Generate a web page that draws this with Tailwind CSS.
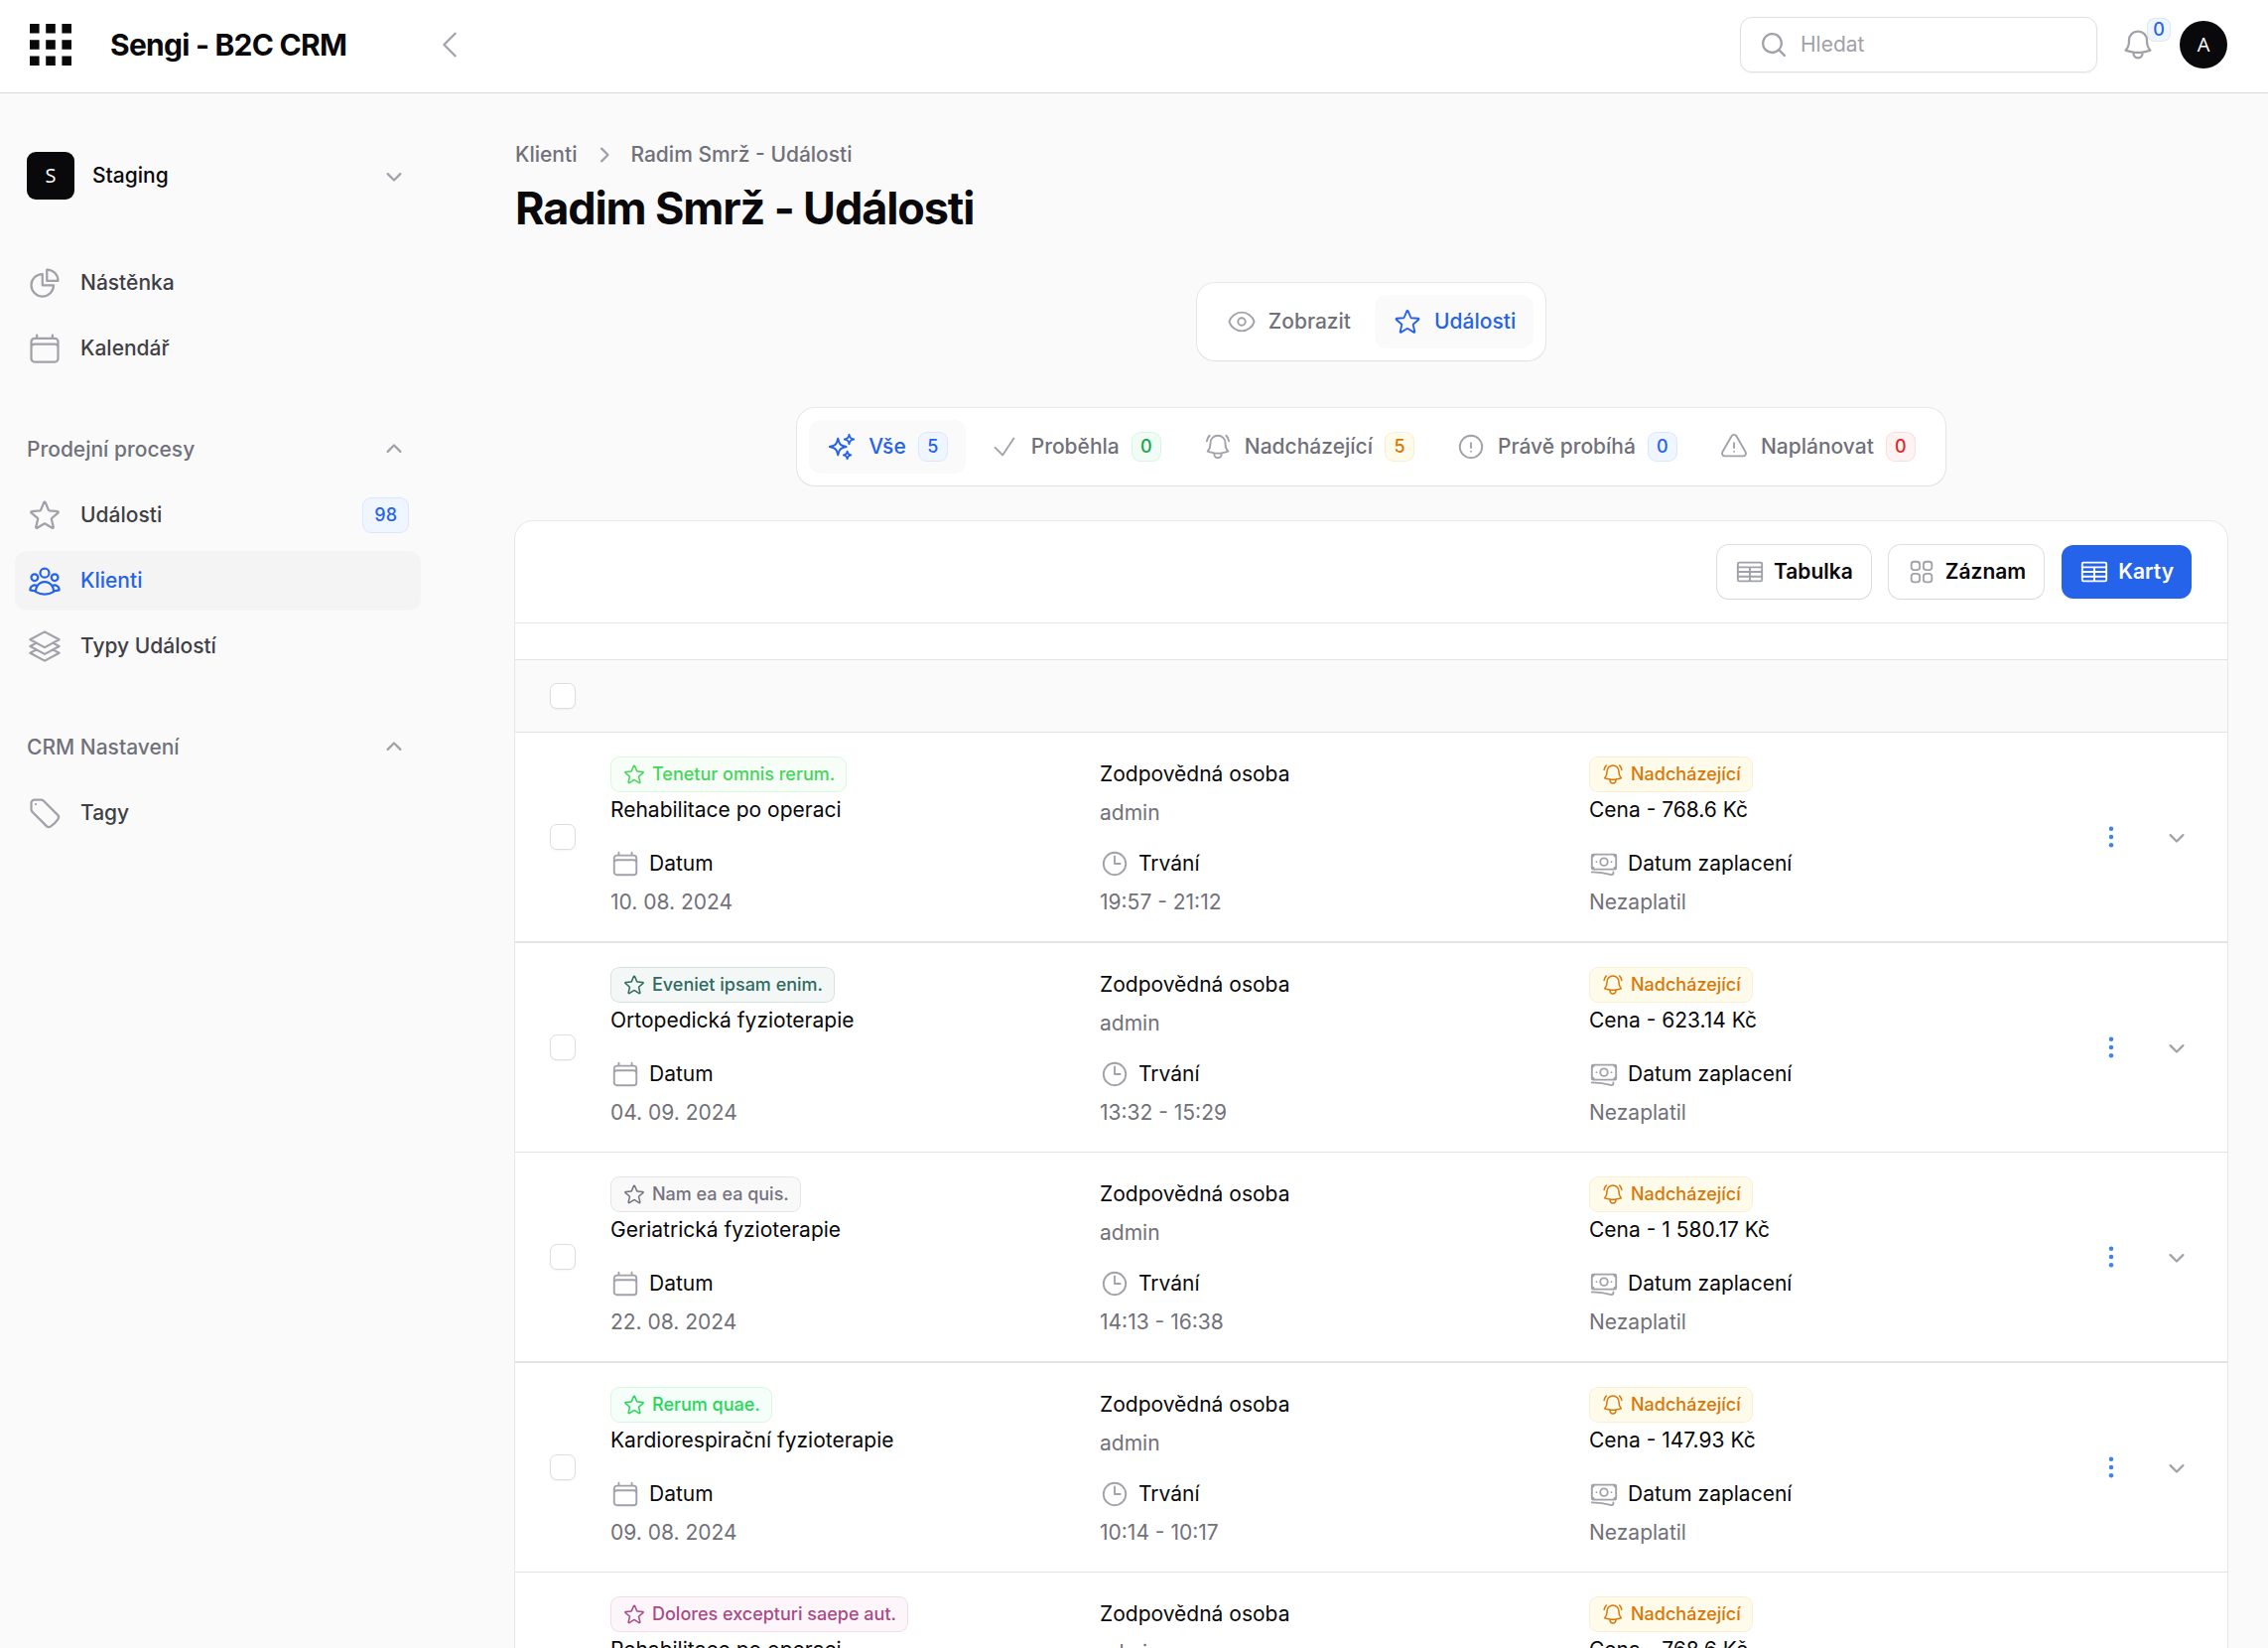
<!DOCTYPE html>
<html lang="cs">
<head>
<meta charset="utf-8">
<title>Radim Smrž - Události - Sengi - B2C CRM</title>
<meta name="viewport" content="width=device-width, initial-scale=1">
<script src="https://cdn.jsdelivr.net/npm/@tailwindcss/browser@4"></script>
</head>
<body class="flex h-screen flex-col overflow-hidden bg-[#fafafa] font-['Inter',sans-serif] text-[21px] leading-[30px] text-[#09090b] antialiased">

<!-- Icon sprite -->
<svg class="hidden" aria-hidden="true">
  <symbol id="i-star" viewBox="0 0 24 24"><path d="M11.48 3.499a.562.562 0 0 1 1.04 0l2.125 5.111a.563.563 0 0 0 .475.345l5.518.442c.499.04.701.663.321.988l-4.204 3.602a.563.563 0 0 0-.182.557l1.285 5.385a.562.562 0 0 1-.84.61l-4.725-2.885a.562.562 0 0 0-.586 0L6.982 20.54a.562.562 0 0 1-.84-.61l1.285-5.386a.562.562 0 0 0-.182-.557l-4.204-3.602a.562.562 0 0 1 .321-.988l5.518-.442a.563.563 0 0 0 .475-.345L11.48 3.5Z"/></symbol>
  <symbol id="i-pie" viewBox="0 0 24 24"><path d="M10.5 6a7.5 7.5 0 1 0 7.5 7.5h-7.5V6Z"/><path d="M13.5 10.5H21A7.5 7.5 0 0 0 13.5 3v7.5Z"/></symbol>
  <symbol id="i-calendar" viewBox="0 0 24 24"><path d="M6.75 3v2.25M17.25 3v2.25M3 18.75V7.5a2.25 2.25 0 0 1 2.25-2.25h13.5A2.25 2.25 0 0 1 21 7.5v11.25m-18 0A2.25 2.25 0 0 0 5.25 21h13.5A2.25 2.25 0 0 0 21 18.75m-18 0v-7.5A2.25 2.25 0 0 1 5.25 9h13.5A2.25 2.25 0 0 1 21 11.25v7.5"/></symbol>
  <symbol id="i-users" viewBox="0 0 24 24"><path d="M18 18.72a9.094 9.094 0 0 0 3.741-.479 3 3 0 0 0-4.682-2.72m.94 3.198.001.031c0 .225-.012.447-.037.666A11.944 11.944 0 0 1 12 21c-2.17 0-4.207-.576-5.963-1.584A6.062 6.062 0 0 1 6 18.719m12 0a5.971 5.971 0 0 0-.941-3.197m0 0A5.995 5.995 0 0 0 12 12.75a5.995 5.995 0 0 0-5.058 2.772m0 0a3 3 0 0 0-4.681 2.72 8.986 8.986 0 0 0 3.74.477m.94-3.197a5.971 5.971 0 0 0-.94 3.197M15 6.75a3 3 0 1 1-6 0 3 3 0 0 1 6 0Zm6 3a2.25 2.25 0 1 1-4.5 0 2.25 2.25 0 0 1 4.5 0Zm-13.5 0a2.25 2.25 0 1 1-4.5 0 2.25 2.25 0 0 1 4.5 0Z"/></symbol>
  <symbol id="i-stack" viewBox="0 0 24 24"><path d="M6.429 9.75 2.25 12l4.179 2.25m0-4.5 5.571 3 5.571-3m-11.142 0L2.25 7.5 12 2.25l9.75 5.25-4.179 2.25m0 0L21.75 12l-4.179 2.25m0 0 4.179 2.25L12 21.75 2.25 16.5l4.179-2.25m11.142 0-5.571 3-5.571-3"/></symbol>
  <symbol id="i-tag" viewBox="0 0 24 24"><path d="M9.568 3H5.25A2.25 2.25 0 0 0 3 5.25v4.318c0 .597.237 1.17.659 1.591l9.581 9.581c.699.699 1.78.872 2.607.33a18.095 18.095 0 0 0 5.223-5.223c.542-.827.369-1.908-.33-2.607L11.16 3.66A2.25 2.25 0 0 0 9.568 3Z"/><path d="M6 6h.008v.008H6V6Z"/></symbol>
  <symbol id="i-bell" viewBox="0 0 24 24"><path d="M14.857 17.082a23.848 23.848 0 0 0 5.454-1.31A8.967 8.967 0 0 1 18 9.75V9A6 6 0 0 0 6 9v.75a8.967 8.967 0 0 1-2.312 6.022c1.733.64 3.56 1.085 5.455 1.31m5.714 0a24.255 24.255 0 0 1-5.714 0m5.714 0a3 3 0 1 1-5.714 0"/></symbol>
  <symbol id="i-bell-alert" viewBox="0 0 24 24"><path d="M14.857 17.082a23.848 23.848 0 0 0 5.454-1.31A8.967 8.967 0 0 1 18 9.75V9A6 6 0 0 0 6 9v.75a8.967 8.967 0 0 1-2.312 6.022c1.733.64 3.56 1.085 5.455 1.31m5.714 0a24.255 24.255 0 0 1-5.714 0m5.714 0a3 3 0 1 1-5.714 0M3.124 7.5A8.969 8.969 0 0 1 5.292 3m13.416 0a8.969 8.969 0 0 1 2.168 4.5"/></symbol>
  <symbol id="i-eye" viewBox="0 0 24 24"><path d="M2.036 12.322a1.012 1.012 0 0 1 0-.639C3.423 7.51 7.36 4.5 12 4.5c4.638 0 8.573 3.007 9.963 7.178.07.207.07.431 0 .639C20.577 16.49 16.64 19.5 12 19.5c-4.638 0-8.573-3.007-9.963-7.178Z"/><path d="M15 12a3 3 0 1 1-6 0 3 3 0 0 1 6 0Z"/></symbol>
  <symbol id="i-sparkles" viewBox="0 0 24 24"><path d="M9.813 15.904 9 18.75l-.813-2.846a4.5 4.5 0 0 0-3.09-3.09L2.25 12l2.846-.813a4.5 4.5 0 0 0 3.09-3.09L9 5.25l.813 2.846a4.5 4.5 0 0 0 3.09 3.09L15.75 12l-2.846.813a4.5 4.5 0 0 0-3.09 3.09ZM18.259 8.715 18 9.75l-.259-1.035a3.375 3.375 0 0 0-2.455-2.456L14.25 6l1.036-.259a3.375 3.375 0 0 0 2.455-2.456L18 2.25l.259 1.035a3.375 3.375 0 0 0 2.456 2.456L21.75 6l-1.035.259a3.375 3.375 0 0 0-2.456 2.456ZM16.894 20.567 16.5 21.75l-.394-1.183a2.25 2.25 0 0 0-1.423-1.423L13.5 18.75l1.183-.394a2.25 2.25 0 0 0 1.423-1.423l.394-1.183.394 1.183a2.25 2.25 0 0 0 1.423 1.423l1.183.394-1.183.394a2.25 2.25 0 0 0-1.423 1.423Z"/></symbol>
  <symbol id="i-check" viewBox="0 0 24 24"><path d="m4.5 12.75 6 6 9-13.5"/></symbol>
  <symbol id="i-info" viewBox="0 0 24 24"><path d="M12 9v3.75m9-.75a9 9 0 1 1-18 0 9 9 0 0 1 18 0Zm-9 3.75h.008v.008H12v-.008Z"/></symbol>
  <symbol id="i-warning" viewBox="0 0 24 24"><path d="M12 9v3.75m-9.303 3.376c-.866 1.5.217 3.374 1.948 3.374h14.71c1.73 0 2.813-1.874 1.948-3.374L13.949 3.378c-.866-1.5-3.032-1.5-3.898 0L2.697 16.126ZM12 15.75h.007v.008H12v-.008Z"/></symbol>
  <symbol id="i-table" viewBox="0 0 24 24"><path d="M3.375 19.5h17.25m-17.25 0a1.125 1.125 0 0 1-1.125-1.125M3.375 19.5h7.5c.621 0 1.125-.504 1.125-1.125m-9.75 0V5.625m0 12.75v-1.5c0-.621.504-1.125 1.125-1.125m18.375 2.625V5.625m0 12.75c0 .621-.504 1.125-1.125 1.125m1.125-1.125v-1.5c0-.621-.504-1.125-1.125-1.125m0 3.75h-7.5A1.125 1.125 0 0 1 12 18.375m9.75-12.75c0-.621-.504-1.125-1.125-1.125H3.375c-.621 0-1.125.504-1.125 1.125m19.5 0v1.5c0 .621-.504 1.125-1.125 1.125M2.25 5.625v1.5c0 .621.504 1.125 1.125 1.125m0 0h17.25m-17.25 0h7.5c.621 0 1.125.504 1.125 1.125M3.375 8.25c-.621 0-1.125.504-1.125 1.125v1.5c0 .621.504 1.125 1.125 1.125m17.25-3.75h-7.5c-.621 0-1.125.504-1.125 1.125m8.625-1.125c.621 0 1.125.504 1.125 1.125v1.5c0 .621-.504 1.125-1.125 1.125m-17.25 0h7.5m-7.5 0c-.621 0-1.125.504-1.125 1.125v1.5c0 .621.504 1.125 1.125 1.125M12 10.875v-1.5m0 1.5c0 .621-.504 1.125-1.125 1.125M12 10.875c0 .621.504 1.125 1.125 1.125m-2.25 0c.621 0 1.125.504 1.125 1.125M13.125 12h7.5m-7.5 0c-.621 0-1.125.504-1.125 1.125M20.625 12c.621 0 1.125.504 1.125 1.125v1.5c0 .621-.504 1.125-1.125 1.125m-17.25 0h7.5M12 14.625v-1.5m0 1.5c0 .621-.504 1.125-1.125 1.125M12 14.625c0 .621.504 1.125 1.125 1.125m-2.25 0c.621 0 1.125.504 1.125 1.125m0 1.5v-1.5m0 0c0-.621.504-1.125 1.125-1.125m0 0h7.5"/></symbol>
  <symbol id="i-squares" viewBox="0 0 24 24"><rect x="3.75" y="3.75" width="6.75" height="6.75" rx="2.25"/><rect x="13.5" y="3.75" width="6.75" height="6.75" rx="2.25"/><rect x="3.75" y="13.5" width="6.75" height="6.75" rx="2.25"/><rect x="13.5" y="13.5" width="6.75" height="6.75" rx="2.25"/></symbol>
  <symbol id="i-clock" viewBox="0 0 24 24"><path d="M12 6v6h4.5m4.5 0a9 9 0 1 1-18 0 9 9 0 0 1 18 0Z"/></symbol>
  <symbol id="i-cash" viewBox="0 0 24 24"><path d="M2.25 18.75a60.07 60.07 0 0 1 15.797 2.101c.727.198 1.453-.342 1.453-1.096V18.75M3.75 4.5v.75A.75.75 0 0 1 3 6h-.75m0 0v-.375c0-.621.504-1.125 1.125-1.125H20.25M2.25 6v9m18-10.5v.75c0 .414.336.75.75.75h.75m-1.5-1.5h.375c.621 0 1.125.504 1.125 1.125v9.75c0 .621-.504 1.125-1.125 1.125h-.375m1.5-1.5H21a.75.75 0 0 0-.75.75v.75m0 0H3.75m0 0h-.375a1.125 1.125 0 0 1-1.125-1.125V15m1.5 1.5v-.75A.75.75 0 0 0 3 15h-.75M15 10.5a3 3 0 1 1-6 0 3 3 0 0 1 6 0Zm3 0h.008v.008H18V10.5Zm-12 0h.008v.008H6V10.5Z"/></symbol>
  <symbol id="i-back" viewBox="0 0 24 24"><path d="M15.75 19.5 8.25 12l7.5-7.5"/></symbol>
  <symbol id="i-search" viewBox="0 0 20 20"><path d="M9 3.5a5.5 5.5 0 1 0 0 11 5.5 5.5 0 0 0 0-11ZM2 9a7 7 0 1 1 12.452 4.391l3.328 3.329a.75.75 0 1 1-1.06 1.06l-3.329-3.328A7 7 0 0 1 2 9Z"/></symbol>
  <symbol id="i-down" viewBox="0 0 20 20"><path d="M5.22 8.22a.75.75 0 0 1 1.06 0L10 11.94l3.72-3.72a.75.75 0 1 1 1.06 1.06l-4.25 4.25a.75.75 0 0 1-1.06 0L5.22 9.28a.75.75 0 0 1 0-1.06Z"/></symbol>
  <symbol id="i-right" viewBox="0 0 20 20"><path d="M8.22 5.22a.75.75 0 0 1 1.06 0l4.25 4.25a.75.75 0 0 1 0 1.06l-4.25 4.25a.75.75 0 0 1-1.06-1.06L11.94 10 8.22 6.28a.75.75 0 0 1 0-1.06Z"/></symbol>
  <symbol id="i-dots" viewBox="0 0 20 20"><circle cx="10" cy="4.5" r="1.5"/><circle cx="10" cy="10" r="1.5"/><circle cx="10" cy="15.5" r="1.5"/></symbol>
</svg>

<!-- Top bar -->
<header class="z-10 flex h-[93px] shrink-0 items-center justify-between bg-white pr-[41px] pb-[3px] shadow-xs ring-1 ring-[#09090b]/10">
  <div class="flex w-[471px] items-center pl-[30px]">
    <button aria-label="Aplikace"><svg class="size-[42px] fill-[#09090b]" viewBox="0 0 42 42"><path d="M0 0h9.6v9.6H0zM16.2 0h9.6v9.6h-9.6zM32.4 0H42v9.6h-9.6zM0 16.2h9.6v9.6H0zM16.2 16.2h9.6v9.6h-9.6zM32.4 16.2H42v9.6h-9.6zM0 32.4h9.6V42H0zM16.2 32.4h9.6V42h-9.6zM32.4 32.4H42V42h-9.6z"/></svg></button>
    <a href="#" class="ml-[39px] text-[30px] leading-[30px] font-bold tracking-tight">Sengi - B2C CRM</a>
    <button aria-label="Sbalit menu" class="ml-auto text-[#a1a1aa]"><svg class="size-9 fill-none stroke-current stroke-[1.5] [stroke-linecap:round] [stroke-linejoin:round]"><use href="#i-back"/></svg></button>
  </div>
  <div class="flex items-center">
    <label class="mr-[23px] flex h-14 w-[360px] items-center gap-3 rounded-xl border border-[#e0e0e1] bg-white px-[18px] shadow-xs">
      <svg class="size-[30px] fill-[#a1a1aa]"><use href="#i-search"/></svg>
      <input type="search" aria-label="Hledat" placeholder="Hledat" class="min-w-0 flex-1 bg-transparent outline-none placeholder:text-[#a1a1aa]">
    </label>
    <button aria-label="Oznámení" class="relative mr-6 text-[#a1a1aa]">
      <svg class="size-9 fill-none stroke-current stroke-[1.5] [stroke-linecap:round] [stroke-linejoin:round]"><use href="#i-bell"/></svg>
      <span class="absolute -top-[9px] left-[27px] flex size-6 items-center justify-center rounded-lg bg-[#eff6ff] text-[18px] leading-6 font-medium text-[#2563eb] inset-ring inset-ring-[#2563eb]/10">0</span>
    </button>
    <button class="flex size-12 items-center justify-center rounded-full bg-[#09090b] font-['Open_Sans',sans-serif] text-[20px] text-white">A</button>
  </div>
</header>

<div class="flex min-h-0 flex-1">
  <!-- Sidebar -->
  <aside class="w-[478px] shrink-0 pt-[54px] pr-[54px] pl-[15px] font-medium">
    <button class="flex h-[60px] w-full items-center gap-[18px] px-3 text-left">
      <span class="flex size-12 items-center justify-center rounded-[9px] bg-[#09090b] font-['Open_Sans',sans-serif] text-[20px] font-normal text-white">S</span>
      Staging
      <svg class="ml-auto size-[30px] fill-[#a1a1aa]"><use href="#i-down"/></svg>
    </button>
    <nav id="nav" class="mt-12 flex flex-col gap-[42px]"></nav>
  </aside>

  <!-- Page -->
  <main class="min-w-0 flex-1 overflow-hidden px-[41px] pt-12">
    <nav aria-label="Drobečková navigace" class="flex items-center gap-3 font-medium text-[#71717a]">
      <a href="#">Klienti</a>
      <svg class="size-[30px] fill-[#a1a1aa]"><use href="#i-right"/></svg>
      <a href="#">Radim Smrž - Události</a>
    </nav>
    <h1 class="mt-3 text-[45px] leading-[54px] font-bold tracking-tight">Radim Smrž - Události</h1>

    <div id="pages" class="mx-auto mt-12 flex w-fit gap-[6px] rounded-[18px] bg-white p-3 shadow-xs ring-1 ring-[#09090b]/7"></div>
    <div id="filters" class="mx-auto mt-12 flex w-fit gap-[6px] rounded-[18px] bg-white p-3 shadow-xs ring-1 ring-[#09090b]/7"></div>

    <section class="mt-9 rounded-[18px] bg-white shadow-xs ring-1 ring-[#09090b]/7">
      <div class="flex justify-end gap-[18px] border-b border-[#e4e4e7] px-9 py-6 font-semibold">
        <button class="flex h-[54px] items-center gap-[9px] rounded-xl bg-white px-[18px] shadow-xs ring-1 ring-[#09090b]/12"><svg class="size-[30px] fill-none stroke-[#a1a1aa] stroke-[1.5] [stroke-linecap:round] [stroke-linejoin:round]"><use href="#i-table"/></svg>Tabulka</button>
        <button class="flex h-[54px] items-center gap-[9px] rounded-xl bg-white px-[18px] shadow-xs ring-1 ring-[#09090b]/12"><svg class="size-[30px] fill-none stroke-[#a1a1aa] stroke-[1.5] [stroke-linecap:round] [stroke-linejoin:round]"><use href="#i-squares"/></svg>Záznam</button>
        <button class="flex h-[54px] items-center gap-[9px] rounded-xl bg-[#2563eb] px-[18px] text-white shadow-xs"><svg class="size-[30px] fill-none stroke-white stroke-[1.5] [stroke-linecap:round] [stroke-linejoin:round]"><use href="#i-table"/></svg>Karty</button>
      </div>
      <div class="h-[37px] border-b border-[#e4e4e7]"></div>
      <div class="flex h-[73px] items-center border-b border-[#e4e4e7] bg-[#fafafa] px-[35px]">
        <input type="checkbox" aria-label="Vybrat vše" class="size-[26px] appearance-none rounded-[7px] border border-[#dededf] bg-white shadow-xs">
      </div>
      <ul id="records"></ul>
    </section>
  </main>
</div>

<script>
const icon = (name, cls) => `<svg class="shrink-0 fill-none stroke-current stroke-[1.5] [stroke-linecap:round] [stroke-linejoin:round] ${cls}"><use href="#i-${name}"/></svg>`;
const tones = {
  blue: 'bg-[#eff6ff] text-[#2563eb] inset-ring-[#2563eb]/10',
  green: 'bg-[#f0fdf4] text-[#16a34a] inset-ring-[#16a34a]/10',
  amber: 'bg-[#fffbeb] text-[#d97706] inset-ring-[#d97706]/10',
  red: 'bg-[#fef2f2] text-[#dc2626] inset-ring-[#dc2626]/10',
};

// Sidebar navigation
const groups = [
  { items: [['pie', 'Nástěnka'], ['calendar', 'Kalendář']] },
  { label: 'Prodejní procesy', items: [['star', 'Události', '98'], ['users', 'Klienti', '', true], ['stack', 'Typy Událostí']] },
  { label: 'CRM Nastavení', items: [['tag', 'Tagy']] },
];
document.getElementById('nav').innerHTML = groups.map(g => `
  <div class="flex flex-col gap-[6px]">
    ${g.label ? `<button class="flex h-[60px] items-center justify-between px-3 text-[#71717a]">${g.label}<svg class="size-[30px] rotate-180 fill-[#a1a1aa]"><use href="#i-down"/></svg></button>` : ''}
    ${g.items.map(([ic, text, badge, active]) => `
      <a href="#" class="flex h-[60px] items-center gap-[18px] rounded-xl px-3 ${active ? 'bg-[#f4f4f5] text-[#2563eb]' : 'text-[#3f3f46]'}">
        ${icon(ic, active ? 'size-9' : 'size-9 text-[#a1a1aa]')}
        ${text}
        ${badge ? `<span class="ml-auto rounded-[9px] px-3 py-[6px] text-[18px] leading-6 inset-ring ${tones.blue}">${badge}</span>` : ''}
      </a>`).join('')}
  </div>`).join('');

// Tab strips
const tab = ([ic, text, active, count, tone]) => `
  <a href="#" class="flex h-[54px] items-center gap-3 rounded-xl px-[18px] font-medium ${active ? 'bg-[#fafafa] text-[#2563eb]' : 'text-[#71717a]'}">
    ${icon(ic, active ? 'size-[30px]' : 'size-[30px] text-[#a1a1aa]')}
    ${text}
    ${count !== undefined ? `<span class="flex size-[30px] items-center justify-center rounded-[9px] text-[18px] leading-6 inset-ring ${tones[tone]}">${count}</span>` : ''}
  </a>`;
document.getElementById('pages').innerHTML = [['eye', 'Zobrazit', false], ['star', 'Události', true]].map(tab).join('');
document.getElementById('filters').innerHTML = [
  ['sparkles', 'Vše', true, 5, 'blue'],
  ['check', 'Proběhla', false, 0, 'green'],
  ['bell-alert', 'Nadcházející', false, 5, 'amber'],
  ['info', 'Právě probíhá', false, 0, 'blue'],
  ['warning', 'Naplánovat', false, 0, 'red'],
].map(tab).join('');

// Event records
const records = [
  ['Tenetur omnis rerum.', 'bg-[#f6fef7] text-[#45d55a] inset-ring-[#45d55a]/15', 'Rehabilitace po operaci', '10. 08. 2024', '19:57 - 21:12', '768.6'],
  ['Eveniet ipsam enim.', 'bg-[#f3f8f7] text-[#2f6b5f] inset-ring-[#2f6b5f]/15', 'Ortopedická fyzioterapie', '04. 09. 2024', '13:32 - 15:29', '623.14'],
  ['Nam ea ea quis.', 'bg-[#f9f9fa] text-[#75727f] inset-ring-[#75727f]/15', 'Geriatrická fyzioterapie', '22. 08. 2024', '14:13 - 16:38', '1 580.17'],
  ['Rerum quae.', 'bg-[#f5fef8] text-[#22d957] inset-ring-[#22d957]/15', 'Kardiorespirační fyzioterapie', '09. 08. 2024', '10:14 - 10:17', '147.93'],
  ['Dolores excepturi saepe aut.', 'bg-[#fcf6fa] text-[#a84b86] inset-ring-[#a84b86]/15', 'Rehabilitace po operaci', '16. 08. 2024', '11:20 - 12:45', '768.6'],
];
const badge = (ic, text, tone) => `<span class="flex h-9 w-fit items-center gap-[6px] rounded-[9px] px-3 text-[18px] leading-6 font-medium inset-ring ${tone}">${icon(ic, 'size-6')}${text}</span>`;
const field = (ic, label, value) => `
  <div class="mt-[15px]">
    <div class="flex items-center gap-[9px]">${icon(ic, 'size-[30px] text-[#a1a1aa]')}${label}</div>
    <div class="mt-[3px] text-[#71717a]">${value}</div>
  </div>`;
document.getElementById('records').innerHTML = records.map(([tag, tone, name, date, time, price]) => `
  <li class="flex items-center border-[#e4e4e7] pr-9 pl-[35px] leading-9 odd:border-b-2 even:border-b">
    <input type="checkbox" aria-label="Vybrat ${name}" class="size-[26px] shrink-0 appearance-none rounded-[7px] border border-[#dededf] bg-white shadow-xs">
    <div class="grid flex-1 grid-cols-3 pt-6 pb-[21px] pl-[35px]">
      <div>
        <div class="h-[75px]">${badge('star', tag, tone)}<div>${name}</div></div>
        ${field('calendar', 'Datum', date)}
      </div>
      <div>
        <div class="h-[75px]"><div>Zodpovědná osoba</div><div class="mt-[3px] text-[#71717a]">admin</div></div>
        ${field('clock', 'Trvání', time)}
      </div>
      <div>
        <div class="h-[75px]">${badge('bell-alert', 'Nadcházející', tones.amber)}<div>Cena - ${price} Kč</div></div>
        ${field('cash', 'Datum zaplacení', 'Nezaplatil')}
      </div>
    </div>
    <div class="flex gap-9 pl-[18px]">
      <button aria-label="Akce"><svg class="size-[30px] fill-[#3b82f6]"><use href="#i-dots"/></svg></button>
      <button aria-label="Rozbalit"><svg class="size-[30px] fill-[#a1a1aa]"><use href="#i-down"/></svg></button>
    </div>
  </li>`).join('');
</script>
</body>
</html>
